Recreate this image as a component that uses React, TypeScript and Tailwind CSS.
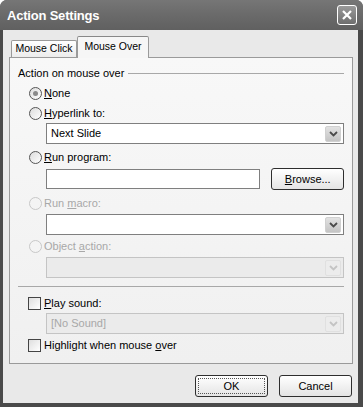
import React from "react";

const font = { fontFamily: '"Liberation Sans", Arial, sans-serif' };

function Radio({ checked, disabled }: { checked?: boolean; disabled?: boolean }) {
    return (
        <div
            className={`w-[13px] h-[13px] rounded-full border flex items-center justify-center shrink-0 ${
                disabled ? "border-[#c8c8c8] bg-[#f4f4f4]" : "border-[#555] bg-gradient-to-br from-[#dcdcdc] to-white"
            }`}
        >
            {checked && <div className="w-[5px] h-[5px] rounded-full bg-[#8a8a8a]" />}
        </div>
    );
}

function Checkbox() {
    return <div className="w-[13px] h-[13px] border border-[#444] bg-gradient-to-br from-[#dedede] to-white shrink-0" />;
}

function Chevron({ disabled }: { disabled?: boolean }) {
    return (
        <div
            className={`w-[16px] h-[16px] rounded-[2px] flex items-center justify-center ${
                disabled ? "bg-[#ececec] border border-[#e0e0e0]" : "bg-gradient-to-b from-[#e2e2e2] to-[#c4c4c4] border border-[#d0d0d0]"
            }`}
        >
            <svg width="9" height="6" viewBox="0 0 9 6">
                <path d="M1 1 L4.5 4.5 L8 1" fill="none" stroke={disabled ? "#c4c4c4" : "#4a4a4a"} strokeWidth="1.8" />
            </svg>
        </div>
    );
}

function Select({ value, disabled }: { value?: string; disabled?: boolean }) {
    return (
        <div
            className={`ml-[36px] mr-[8px] h-[21px] border flex items-center justify-between pl-[4px] pr-[2px] ${
                disabled ? "border-[#c4c4c4] bg-[#ebebeb] text-[#a8a8a8]" : "border-[#7f7f7f] bg-white text-black"
            }`}
        >
            <span>{value}</span>
            <Chevron disabled={disabled} />
        </div>
    );
}

function Button({ children, focused }: { children: React.ReactNode; focused?: boolean }) {
    return (
        <div className="w-[73px] h-[22px] rounded-[3px] border border-[#2e2e2e] bg-gradient-to-b from-white to-[#e4e4e4] flex items-center justify-center p-[2px]">
            <div
                className={`w-full h-full flex items-center justify-center ${
                    focused ? "border border-dotted border-[#555]" : ""
                }`}
            >
                {children}
            </div>
        </div>
    );
}

export default function App() {
    return (
        <div style={font} className="w-[363px] h-[407px] bg-[#4a4a4a] rounded-t-[7px] flex flex-col text-[11px] text-black">
            {/* title bar */}
            <div className="h-[30px] shrink-0 rounded-t-[7px] bg-gradient-to-b from-[#767676] via-[#6a6a6a] to-[#606060] flex items-center justify-between pl-[7px] pr-[6px]">
                <span className="text-white font-bold text-[13px] tracking-[-0.2px] mt-[1px]">Action Settings</span>
                <div className="w-[20px] h-[20px] rounded-[3px] border border-white bg-gradient-to-b from-[#9a9a9a] to-[#6e6e6e] flex items-center justify-center">
                    <svg width="12" height="12" viewBox="0 0 12 12">
                        <path d="M2 2 L10 10 M10 2 L2 10" stroke="white" strokeWidth="2.2" />
                    </svg>
                </div>
            </div>

            {/* body */}
            <div className="flex-1 mx-[3px] mb-[4px] mr-[5px] bg-[#e9e9e9] flex flex-col">
                {/* tabs */}
                <div className="flex items-end h-[27px] ml-[8px] text-[10.5px]">
                    <div className="h-[17px] w-[66px] border border-b-0 border-[#9a9a9a] bg-gradient-to-b from-white to-[#ececec] flex items-center justify-center rounded-t-[2px]">
                        Mouse Click
                    </div>
                    <div className="h-[22px] w-[72px] border border-b-0 border-[#9a9a9a] border-t-[#888] bg-[#f6f6f6] flex items-start justify-center pt-[2px] rounded-t-[2px] -mb-[1px] relative z-10">
                        Mouse Over
                    </div>
                </div>

                {/* panel */}
                <div className="ml-[6px] w-[344px] h-[307px] border border-[#9a9a9a] bg-gradient-to-b from-[#f8f8f8] to-[#f0f0f0] flex flex-col">
                    <div className="mt-[8px] h-[14px] flex items-center pl-[8px] pr-[8px]">
                        <span>Action on mouse over</span>
                        <div className="flex-1 h-px bg-[#a8a8a8] ml-[4px]" />
                    </div>

                    <div className="mt-[6px] h-[14px] flex items-center pl-[19px] gap-[2px]">
                        <Radio checked />
                        <span><u>N</u>one</span>
                    </div>

                    <div className="mt-[6px] h-[14px] flex items-center pl-[19px] gap-[2px]">
                        <Radio />
                        <span><u>H</u>yperlink to:</span>
                    </div>
                    <div className="mt-[3px]">
                        <Select value="Next Slide" />
                    </div>

                    <div className="mt-[6px] h-[14px] flex items-center pl-[19px] gap-[2px]">
                        <Radio />
                        <span><u>R</u>un program:</span>
                    </div>
                    <div className="mt-[4px] flex items-center pl-[36px] pr-[8px] gap-[11px]">
                        <div className="w-[216px] h-[20px] border border-[#7f7f7f] bg-white" />
                        <Button>
                            <span><u>B</u>rowse...</span>
                        </Button>
                    </div>

                    <div className="mt-[6px] h-[14px] flex items-center pl-[19px] gap-[2px] text-[#a8a8a8]">
                        <Radio disabled />
                        <span>Run <u>m</u>acro:</span>
                    </div>
                    <div className="mt-[4px]">
                        <Select value="" />
                    </div>

                    <div className="mt-[4px] h-[14px] flex items-center pl-[19px] gap-[2px] text-[#a8a8a8]">
                        <Radio disabled />
                        <span>Object <u>a</u>ction:</span>
                    </div>
                    <div className="mt-[4px]">
                        <Select value="" disabled />
                    </div>

                    <div className="mt-[8px] mx-[8px] h-px bg-[#a8a8a8]" />

                    <div className="mt-[9px] h-[14px] flex items-center pl-[18px] gap-[3px]">
                        <Checkbox />
                        <span><u>P</u>lay sound:</span>
                    </div>
                    <div className="mt-[3px]">
                        <Select value="[No Sound]" disabled />
                    </div>

                    <div className="mt-[4px] h-[14px] flex items-center pl-[18px] gap-[3px]">
                        <Checkbox />
                        <span>Highlight when mouse <u>o</u>ver</span>
                    </div>
                </div>

                {/* buttons */}
                <div className="mt-[11px] flex justify-end gap-[11px] pr-[6px]">
                    <Button focused>OK</Button>
                    <Button>Cancel</Button>
                </div>
            </div>
        </div>
    );
}
